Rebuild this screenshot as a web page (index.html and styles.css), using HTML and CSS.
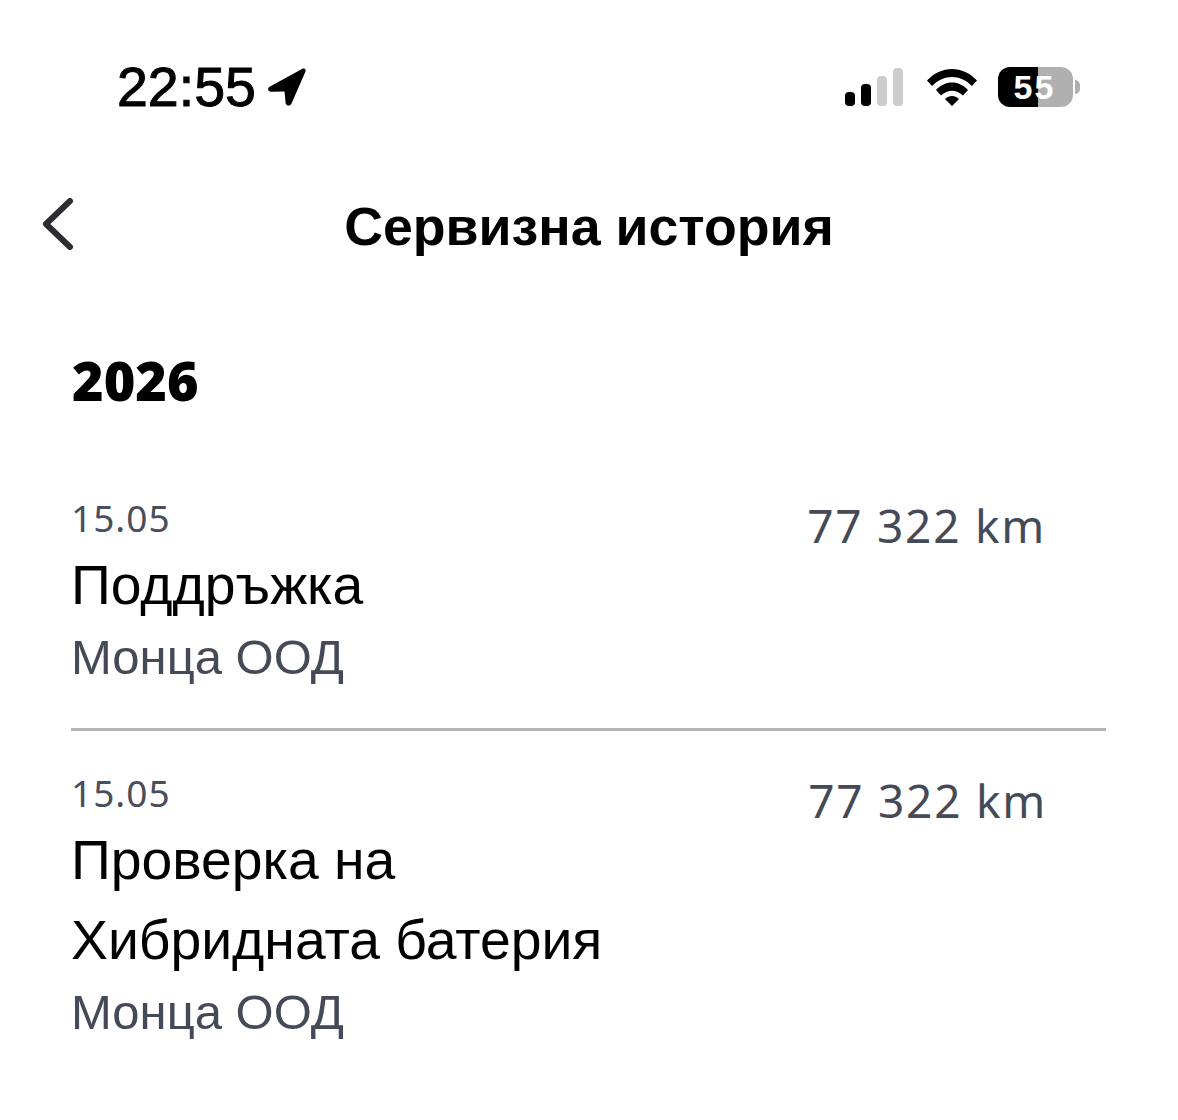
FILE: index.html
```html
<!DOCTYPE html>
<html lang="bg">
<head>
<meta charset="utf-8">
<title>Сервизна история</title>
<link rel="stylesheet" href="styles.css">
</head>
<body>
<div class="screen">
  <header class="status">
    <div class="status-left">
      <span class="time">22:55</span>
      <svg class="loc" width="42" height="42" viewBox="0 0 42 42"><path d="M4 20.500 36 3c2.600-1.400 4.500.6 3.300 3L25.500 37.500c-1.300 3-5.500 2.600-5.900-.8L18.500 25.500 6 25.800c-4 0-5.300-3.300-2-5.300Z" fill="#000"/></svg>
    </div>
    <div class="status-right">
      <svg class="signal" width="59" height="38" viewBox="0 0 59 38"><rect x="0" y="24" width="10" height="14" rx="4" fill="#000"/><rect x="16" y="16" width="10" height="22" rx="4" fill="#000"/><rect x="32" y="8" width="10" height="30" rx="4" fill="#ccc"/><rect x="48" y="0" width="10" height="38" rx="4" fill="#ccc"/></svg>
      <svg class="wifi" width="52" height="38" viewBox="0 0 50 38"><path d="M0 12.500C14-3 36-3 50 12.500L45 18C33 6 17 6 5 18Z M9 22C18 12 32 12 41 22L36 27.500C29 21 21 21 14 27.500Z M18 31C22 27 28 27 32 31L25 38Z" fill="#000"/></svg>
      <div class="battery">
        <div class="batt-body"><span class="batt-num">55</span></div>
        <div class="batt-tip"></div>
      </div>
    </div>
  </header>
  <nav class="topbar">
    <svg class="back" width="32" height="52" viewBox="0 0 32 52"><path d="M28 3 4 26l24 23" fill="none" stroke="#2b2d33" stroke-width="6" stroke-linecap="round" stroke-linejoin="round"/></svg>
    <h1 class="title">Сервизна история</h1>
  </nav>
  <main class="content">
    <h2 class="year">2026</h2>
    <article class="entry entry-first">
      <div class="entry-main">
        <div class="date">15.05</div>
        <div class="name">Поддръжка</div>
        <div class="shop">Монца ООД</div>
      </div>
      <div class="km">77 322 km</div>
    </article>
    <article class="entry">
      <div class="entry-main">
        <div class="date">15.05</div>
        <div class="name">Проверка на<br>Хибридната батерия</div>
        <div class="shop">Монца ООД</div>
      </div>
      <div class="km">77 322 km</div>
    </article>
  </main>
</div>
</body>
</html>
```

FILE: styles.css
```css
* { box-sizing: border-box; }
html, body { margin: 0; padding: 0; background: #fff; }
.screen { width: 1178px; height: 1120px; overflow: hidden; font-family: "Liberation Sans", Arial, sans-serif; color: #000; }

.status { display: flex; justify-content: space-between; align-items: center; height: 64px; margin-top: 55px; padding: 0 98px 0 117px; }
.status-left { display: flex; align-items: center; gap: 10px; }
.time { font-size: 55.5px; line-height: 64px; font-weight: 400; -webkit-text-stroke: 1px #000; }
.loc { display: block; }
.status-right { display: flex; align-items: center; }
.signal { margin-right: 22px; }
.wifi { margin-right: 20px; }
.battery { display: flex; align-items: center; gap: 2px; }
.batt-body { width: 75px; height: 40px; border-radius: 12px; background: linear-gradient(90deg, #000 0 40px, #b0b0b0 40px); display: flex; align-items: center; justify-content: center; }
.batt-num { color: #fff; font-size: 34px; font-weight: 700; letter-spacing: 2px; margin-left: -2px; }
.batt-tip { width: 5px; height: 14px; background: #b0b0b0; border-radius: 0 6px 6px 0; }

.topbar { position: relative; display: flex; justify-content: center; align-items: center; height: 60px; margin-top: 77px; }
.back { position: absolute; left: 42px; top: 2px; }
.title { margin: 0; font-size: 53.7px; line-height: 60px; font-weight: 700; }

.content { padding: 0 71px; }
.year { margin: 92px 0 0; padding-left: 1px; font-family: "Open Sans", sans-serif; font-size: 54px; line-height: 64px; font-weight: 800; }
.entry { display: flex; justify-content: space-between; align-items: flex-start; padding: 0 60px 0 0; }
.entry-first { margin-top: 84px; width: 1035px; border-bottom: 3px solid #b3b3b6; padding-bottom: 41px; margin-bottom: 40px; }
.date { font-family: "Noto Sans", sans-serif; font-size: 37px; line-height: 44px; color: #4a4e5c; letter-spacing: 1px; }
.name { font-size: 55.3px; line-height: 80px; margin-top: 5px; }
.shop { font-size: 49px; line-height: 60px; color: #454a58; margin-top: 2px; }
.km { font-family: "Noto Sans", sans-serif; font-size: 46px; line-height: 54px; color: #454a58; letter-spacing: 1.75px; margin-top: 2px; }
```
